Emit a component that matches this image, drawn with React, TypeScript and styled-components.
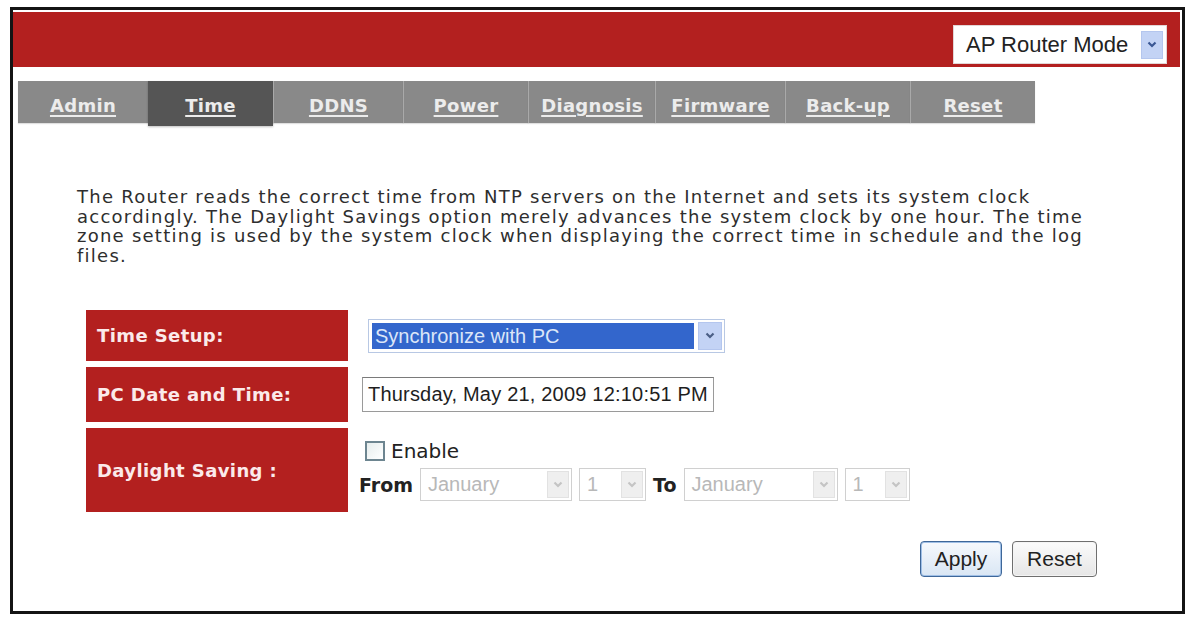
import React from "react";
import styled, { createGlobalStyle } from "styled-components";

const GlobalStyle = createGlobalStyle`
  html, body {
    margin: 0;
    padding: 0;
    background: #ffffff;
  }
  body {
    font-family: "DejaVu Sans", Verdana, sans-serif;
  }
`;

const Frame = styled.div`
  box-sizing: border-box;
  margin: 7px 0 0 10px;
  width: 1175px;
  height: 607px;
  border: 3px solid #141414;
  padding-top: 2px;
  display: flex;
  flex-direction: column;
`;

const HeaderBar = styled.div`
  height: 55px;
  margin-right: 2px;
  background: #b3201f;
  display: flex;
  justify-content: flex-end;
  align-items: flex-start;
  padding: 13px 13px 0 0;
  box-sizing: border-box;
`;

const ModeSelect = styled.div`
  box-sizing: border-box;
  width: 214px;
  height: 39px;
  background: #ffffff;
  border: 1px solid #e2d6d6;
  display: flex;
  align-items: center;
  justify-content: space-between;
  padding: 0 3px 0 12px;
  font-family: "Liberation Sans", Arial, sans-serif;
  font-size: 22px;
  color: #222;
`;

const ArrowBox = styled.span<{ $disabled?: boolean; $w?: number; $h?: number }>`
  box-sizing: border-box;
  width: ${(p) => p.$w ?? 22}px;
  height: ${(p) => p.$h ?? 28}px;
  background: ${(p) => (p.$disabled ? "#efefef" : "#c3d3f5")};
  border: 1px solid ${(p) => (p.$disabled ? "#e2e2e2" : "#b4c6ee")};
  display: flex;
  align-items: center;
  justify-content: center;
  flex-shrink: 0;
`;

const Chevron = ({ color }: { color: string }) => (
  <svg width="10" height="7" viewBox="0 0 10 7">
    <polyline
      points="1.5,1.5 5,5 8.5,1.5"
      fill="none"
      stroke={color}
      strokeWidth="2.2"
    />
  </svg>
);

const TabBar = styled.nav`
  display: flex;
  align-items: flex-start;
  margin: 14px 0 0 5px;
  height: 45px;
`;

const Tab = styled.a<{ $width: number; $active?: boolean; $first?: boolean }>`
  box-sizing: border-box;
  width: ${(p) => p.$width}px;
  height: ${(p) => (p.$active ? 45 : 42)}px;
  background: ${(p) => (p.$active ? "#555555" : "#898989")};
  border-left: ${(p) => (p.$first || p.$active ? "none" : "1px solid #a9a9a9")};
  box-shadow: ${(p) => (p.$active ? "0 1px 2px rgba(0,0,0,0.25)" : "0 1px 1px rgba(0,0,0,0.12)")};
  text-align: center;
  padding-top: 13px;
  line-height: 24px;
  font-family: "DejaVu Sans", Verdana, sans-serif;
  font-weight: bold;
  font-size: 18px;
  letter-spacing: 0.3px;
  color: #ececec;
  text-decoration: underline;
  text-underline-offset: 3px;
  text-decoration-thickness: 2px;
  cursor: pointer;
`;

const Intro = styled.p`
  margin: 61px 0 0 64px;
  font-family: "DejaVu Sans", Verdana, sans-serif;
  font-size: 18px;
  line-height: 19.5px;
  letter-spacing: 1.25px;
  color: #2e2e2e;
  white-space: nowrap;
`;

const FormGrid = styled.div`
  display: grid;
  grid-template-columns: 262px 1fr;
  grid-template-rows: 51px 55px 84px;
  row-gap: 6px;
  margin: 45px 0 0 73px;
  width: 860px;
`;

const Label = styled.div`
  background: #b3201f;
  display: flex;
  align-items: center;
  padding-left: 11px;
  font-family: "DejaVu Sans", Verdana, sans-serif;
  font-weight: bold;
  font-size: 18px;
  letter-spacing: 0.4px;
  color: #fbeaea;
`;

const Value = styled.div`
  display: flex;
  flex-direction: column;
  justify-content: center;
  align-items: flex-start;
  padding-left: 11px;
  gap: 5px;
`;

const SetupSelect = styled.div`
  box-sizing: border-box;
  margin-left: 9px;
  width: 357px;
  height: 34px;
  border: 1px solid #b8c8e4;
  background: #ffffff;
  display: flex;
  align-items: center;
  gap: 4px;
  padding: 0 2px 0 3px;
`;

const Highlight = styled.span`
  flex: 1;
  height: 26px;
  background: #3366cc;
  color: #dce6f8;
  font-family: "Liberation Sans", Arial, sans-serif;
  font-size: 20px;
  line-height: 26px;
  padding-left: 3px;
`;

const TextInput = styled.div`
  box-sizing: border-box;
  margin-left: 3px;
  width: 352px;
  height: 35px;
  border: 1px solid #9a9a9a;
  border-top-color: #7a7a7a;
  background: #ffffff;
  font-family: "Liberation Sans", Arial, sans-serif;
  font-size: 20px;
  letter-spacing: 0.2px;
  line-height: 33px;
  color: #1e1e1e;
  padding-left: 5px;
  white-space: nowrap;
`;

const CheckLine = styled.label`
  display: flex;
  align-items: center;
  gap: 6px;
  margin-left: 6px;
  font-family: "DejaVu Sans", Verdana, sans-serif;
  font-size: 20px;
  color: #222;
`;

const CheckBox = styled.span`
  box-sizing: border-box;
  width: 20px;
  height: 20px;
  border: 2px solid #6d8590;
  background: linear-gradient(135deg, #e6eded, #ffffff);
`;

const RangeLine = styled.div`
  display: flex;
  align-items: center;
  gap: 7px;
`;

const RangeWord = styled.span`
  font-family: "DejaVu Sans", Verdana, sans-serif;
  font-weight: bold;
  font-size: 19px;
  color: #222;
`;

const DisabledSelect = styled.div<{ $width: number }>`
  box-sizing: border-box;
  width: ${(p) => p.$width}px;
  height: 33px;
  border: 1px solid #d0d0d0;
  background: #ffffff;
  display: flex;
  align-items: center;
  justify-content: space-between;
  padding: 0 2px 0 7px;
  font-family: "Liberation Sans", Arial, sans-serif;
  font-size: 20px;
  color: #b8b8b8;
`;

const ButtonRow = styled.div`
  display: flex;
  justify-content: flex-end;
  gap: 10px;
  margin: 29px 85px 0 0;
`;

const Button = styled.button<{ $primary?: boolean; $width: number }>`
  box-sizing: border-box;
  width: ${(p) => p.$width}px;
  height: 36px;
  padding: 0;
  border-radius: 4px;
  border: 1px solid ${(p) => (p.$primary ? "#3e6799" : "#6f6f6f")};
  box-shadow: ${(p) => (p.$primary ? "inset 0 0 0 1px #9fbfe6" : "inset 0 0 0 1px #f4f4f4")};
  background: ${(p) =>
    p.$primary
      ? "linear-gradient(#f6f9fd, #d9e6f4)"
      : "linear-gradient(#fbfbfb, #e6e6e6)"};
  font-family: "Liberation Sans", Arial, sans-serif;
  font-size: 21px;
  color: #222;
`;

const tabs = [
  { label: "Admin", width: 130 },
  { label: "Time", width: 125, active: true },
  { label: "DDNS", width: 130 },
  { label: "Power", width: 125 },
  { label: "Diagnosis", width: 127 },
  { label: "Firmware", width: 130 },
  { label: "Back-up", width: 125 },
  { label: "Reset", width: 125 },
];

export default function App() {
  return (
    <>
      <GlobalStyle />
      <Frame>
        <HeaderBar>
          <ModeSelect>
            AP Router Mode
            <ArrowBox $w={22} $h={28}>
              <Chevron color="#3a5794" />
            </ArrowBox>
          </ModeSelect>
        </HeaderBar>

        <TabBar>
          {tabs.map((t, i) => (
            <Tab key={t.label} $width={t.width} $active={t.active} $first={i === 0}>
              {t.label}
            </Tab>
          ))}
        </TabBar>

        <Intro>
          The Router reads the correct time from NTP servers on the Internet and sets its system clock
          <br />
          accordingly. The Daylight Savings option merely advances the system clock by one hour. The time
          <br />
          zone setting is used by the system clock when displaying the correct time in schedule and the log
          <br />
          files.
        </Intro>

        <FormGrid>
          <Label>Time Setup:</Label>
          <Value>
            <SetupSelect>
              <Highlight>Synchronize with PC</Highlight>
              <ArrowBox $w={24} $h={28}>
                <Chevron color="#4a5f86" />
              </ArrowBox>
            </SetupSelect>
          </Value>

          <Label>PC Date and Time:</Label>
          <Value>
            <TextInput>Thursday, May 21, 2009 12:10:51 PM</TextInput>
          </Value>

          <Label>Daylight Saving :</Label>
          <Value>
            <CheckLine>
              <CheckBox />
              Enable
            </CheckLine>
            <RangeLine>
              <RangeWord>From</RangeWord>
              <DisabledSelect $width={152}>
                January
                <ArrowBox $disabled $w={22} $h={27}>
                  <Chevron color="#c4c4c4" />
                </ArrowBox>
              </DisabledSelect>
              <DisabledSelect $width={67}>
                1
                <ArrowBox $disabled $w={22} $h={27}>
                  <Chevron color="#c4c4c4" />
                </ArrowBox>
              </DisabledSelect>
              <RangeWord>To</RangeWord>
              <DisabledSelect $width={154}>
                January
                <ArrowBox $disabled $w={22} $h={27}>
                  <Chevron color="#c4c4c4" />
                </ArrowBox>
              </DisabledSelect>
              <DisabledSelect $width={65}>
                1
                <ArrowBox $disabled $w={22} $h={27}>
                  <Chevron color="#c4c4c4" />
                </ArrowBox>
              </DisabledSelect>
            </RangeLine>
          </Value>
        </FormGrid>

        <ButtonRow>
          <Button $primary $width={82}>Apply</Button>
          <Button $width={85}>Reset</Button>
        </ButtonRow>
      </Frame>
    </>
  );
}
